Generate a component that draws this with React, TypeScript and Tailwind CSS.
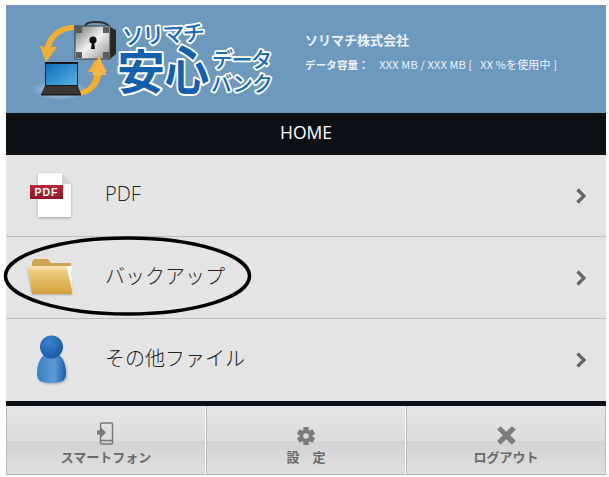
import React from "react";

const JP = "font-['Noto_Sans_CJK_JP','Noto_Sans',sans-serif]";
const LABEL = "font-['Open_Sans','Noto_Sans_CJK_JP',sans-serif]";

function Logo() {
  const ff = "'Noto Sans CJK JP', sans-serif";
  const t = {
    fontFamily: ff,
    fontWeight: 700,
    stroke: "#ffffff",
    paintOrder: "stroke",
    strokeLinejoin: "round" as const,
    fill: "#1560ae",
  };
  const s = { ...t, fontWeight: 500, fill: "#1c6cb8" };
  return (
    <svg width="294" height="108" viewBox="6 5 294 108" className="shrink-0">
      <defs>
        <linearGradient id="lid" x1="0" y1="0" x2="1" y2="1">
          <stop offset="0" stopColor="#6d6d6d" />
          <stop offset="0.5" stopColor="#f2f2f2" />
          <stop offset="1" stopColor="#8a8a8a" />
        </linearGradient>
        <linearGradient id="scr" x1="0" y1="0" x2="1" y2="1">
          <stop offset="0" stopColor="#0f6db8" />
          <stop offset="1" stopColor="#56b2e6" />
        </linearGradient>
        <radialGradient id="glow">
          <stop offset="0" stopColor="#dbe8f4" stopOpacity="0.85" />
          <stop offset="1" stopColor="#dbe8f4" stopOpacity="0" />
        </radialGradient>
      </defs>
      <ellipse cx="60" cy="90" rx="28" ry="10" fill="url(#glow)" />
      <path d="M74 30 C61 31 54 37 51 47 L57 47 L46 62 L40 46 L45 47 C48 35 58 25 74 25 Z" fill="#f4ae2e" />
      <path d="M79 91 C89 89 93 83 95 72 L88 72 L98 55 L107 72 L102 72 C100 86 92 94 79 96 Z" fill="#f4ae2e" />
      <path d="M85 27 C85 23 90 22 95 22 C103 22 108 23 109 27" fill="none" stroke="#2c2c2c" strokeWidth="2" />
      <path d="M110 27 L116 30 L116 54 L110 59 Z" fill="#2d2622" />
      <rect x="75" y="26" width="35" height="33" fill="url(#lid)" stroke="#3a3a3a" strokeWidth="1" />
      <rect x="76" y="27" width="6" height="6" fill="#5c5c5c" />
      <rect x="103" y="27" width="6" height="6" fill="#5c5c5c" />
      <rect x="76" y="52" width="6" height="6" fill="#5c5c5c" />
      <rect x="103" y="52" width="6" height="6" fill="#5c5c5c" />
      <circle cx="93" cy="40" r="3.6" fill="#111" />
      <path d="M92 41 L94 41 L95 49 L91 49 Z" fill="#111" />
      <path d="M92 75 L106 75 L99 55 Z" fill="#f6b64a" />
      <rect x="45" y="62" width="33" height="24" fill="#1a1a1a" />
      <rect x="46" y="64" width="31" height="21" fill="url(#scr)" />
      <path d="M45 86 L78 86 L81 94 L41 94 Z" fill="#3a3533" />
      <rect x="41" y="94" width="40" height="1.5" fill="#1a1a1a" />
      <g transform="rotate(-3 160 35)">
        <text x="122" y="43" fontSize="22" textLength="83" strokeWidth="3.5" style={s}>ソリマチ</text>
      </g>
      <text x="117" y="89" fontSize="47" textLength="48" lengthAdjust="spacingAndGlyphs" strokeWidth="4" style={t}>安</text>
      <text x="165" y="90" fontSize="52" textLength="44" lengthAdjust="spacingAndGlyphs" strokeWidth="4" style={t}>心</text>
      <text x="212" y="67" fontSize="21" textLength="60" strokeWidth="3.5" style={s}>データ</text>
      <text x="211" y="91" fontSize="21" textLength="62" strokeWidth="3.5" style={s}>バンク</text>
    </svg>
  );
}

function Chevron() {
  return (
    <svg width="11" height="16" viewBox="0 0 11 16" className="shrink-0">
      <path d="M1.5 1.5 L8 8 L1.5 14.5" fill="none" stroke="#666666" strokeWidth="3.2" />
    </svg>
  );
}

function PdfIcon() {
  return (
    <svg width="50" height="54" viewBox="0 0 50 54" className="translate-x-[2px] translate-y-[3px]">
      <defs>
        <filter id="s1" x="-30%" y="-30%" width="160%" height="160%">
          <feDropShadow dx="0" dy="1" stdDeviation="1.5" floodColor="#000" floodOpacity="0.3" />
        </filter>
        <linearGradient id="rb" x1="0" y1="0" x2="0" y2="1">
          <stop offset="0" stopColor="#c2263a" />
          <stop offset="1" stopColor="#8e1526" />
        </linearGradient>
      </defs>
      <path d="M9 1 L33 1 L42 12 L42 45 L9 45 Z" fill="#fdfdfd" filter="url(#s1)" />
      <path d="M33 1 L33 12 L42 12 Z" fill="#d2d2d2" />
      <rect x="1" y="13" width="33" height="14" fill="url(#rb)" />
      <text x="17.5" y="24" textAnchor="middle" fontSize="10.5" fontWeight="700" letterSpacing="1" fill="#fff" fontFamily="'Liberation Sans', sans-serif">PDF</text>
    </svg>
  );
}

function FolderIcon() {
  return (
    <svg width="50" height="40" viewBox="0 0 50 40" className="-translate-x-[2px]">
      <defs>
        <filter id="s2" x="-20%" y="-20%" width="140%" height="140%">
          <feDropShadow dx="0" dy="1" stdDeviation="1" floodColor="#000" floodOpacity="0.25" />
        </filter>
        <linearGradient id="fd" x1="0" y1="0" x2="0" y2="1">
          <stop offset="0" stopColor="#f8e6b4" />
          <stop offset="0.2" stopColor="#ecca7c" />
          <stop offset="1" stopColor="#d6a03a" />
        </linearGradient>
      </defs>
      <path d="M7 4 L9 1 L23 1 L26 5 L46 5 L46 10 L7 10 Z" fill="#cfa552" />
      <path d="M2 8 L44 8 L47 36 L7 36 Z" fill="url(#fd)" filter="url(#s2)" />
      <path d="M41 8 L46 8 L47 30 Z" fill="#ffffff" />
    </svg>
  );
}

function PersonIcon() {
  return (
    <svg width="44" height="52" viewBox="0 0 44 52">
      <defs>
        <radialGradient id="hd" cx="0.4" cy="0.3" r="0.8">
          <stop offset="0" stopColor="#3f82cc" />
          <stop offset="1" stopColor="#1255a5" />
        </radialGradient>
        <linearGradient id="bd" x1="0" y1="0" x2="1" y2="0">
          <stop offset="0" stopColor="#3a80c8" />
          <stop offset="0.6" stopColor="#5f98d4" />
          <stop offset="1" stopColor="#1a5fae" />
        </linearGradient>
        <filter id="s3" x="-20%" y="-20%" width="140%" height="140%">
          <feDropShadow dx="1" dy="1" stdDeviation="1" floodColor="#000" floodOpacity="0.25" />
        </filter>
      </defs>
      <path d="M14 21 C9 25 7 32 7 40 C7 47 11 49 21 49 C31 49 36 47 36 40 C36 32 34 25 29 21 Z" fill="url(#bd)" filter="url(#s3)" />
      <circle cx="21.5" cy="13" r="11.5" fill="url(#hd)" />
    </svg>
  );
}

function Row({ icon, label, border, latin }: { icon: React.ReactNode; label: string; border?: boolean; latin?: boolean }) {
  return (
    <div className={`flex h-[82px] items-center bg-[#e4e4e4] pr-[19px] ${border ? "border-b border-[#bdbdbd]" : ""}`}>
      <div className="flex w-[99px] shrink-0 justify-center pr-[7px]">{icon}</div>
      <div className={`flex-1 text-[20px] font-light leading-none text-[#222222] ${latin ? "-translate-y-[2px]" : "-translate-y-[1px]"} ${LABEL}`}>{label}</div>
      <Chevron />
    </div>
  );
}

function FootButton({ icon, label, last }: { icon: React.ReactNode; label: string; last?: boolean }) {
  return (
    <div className={`relative flex h-[69px] flex-1 flex-col items-center border-b border-[#b5b5b5] border-l border-l-[#b9b9b9] bg-[linear-gradient(to_bottom,#e6e6e6_0%,#dcdcdc_52%,#d2d2d2_52%,#dfdfdf_100%)] pt-[16px] ${last ? "border-r border-r-[#b9b9b9]" : "border-r border-r-white"}`}>
      <div className="flex h-[24px] items-end justify-center">{icon}</div>
      <div className={`mt-[1px] whitespace-pre text-[13px] font-bold leading-[20px] text-[#6a6a6a] ${JP}`}>{label}</div>
    </div>
  );
}

export default function App() {
  return (
    <div className="relative h-[477px] w-[609px] overflow-hidden bg-white pl-[6px] pr-[3px] pt-[5px]">
      <header className="flex h-[108px] bg-[#6e99bf]">
        <Logo />
        <div className={`pl-[5px] pt-[26px] text-[#edf2f7] ${JP}`}>
          <div className="text-[13px] font-bold leading-[18px]">ソリマチ株式会社</div>
          <div className="mt-[7px] whitespace-pre text-[11px] leading-[16px] tracking-[0.15px]">
            <span className="text-[10.5px] font-bold">データ容量：</span>
            {"    XXX MB / XXX MB [   XX %を使用中 ]"}
          </div>
        </div>
      </header>
      <div className="flex h-[42px] items-center justify-center bg-[#0d1116] pb-[3px] font-['Open_Sans',sans-serif] text-[17.5px] text-white">HOME</div>
      <Row icon={<PdfIcon />} label="PDF" border latin />
      <Row icon={<FolderIcon />} label="バックアップ" border />
      <Row icon={<PersonIcon />} label="その他ファイル" />
      <div className="h-[5px] bg-[#0d1116]" />
      <div className="flex">
        <FootButton
          label="スマートフォン"
          icon={
            <svg width="18" height="24" viewBox="0 0 18 24">
              <rect x="3.5" y="1" width="12" height="21" rx="1.5" fill="none" stroke="#7a7a7a" strokeWidth="1.5" />
              <path d="M3.5 18.5 L15.5 18.5" stroke="#7a7a7a" strokeWidth="1.5" />
              <path d="M0 8.5 L4 8.5 L4 5.5 L9 10.5 L4 15.5 L4 12.5 L0 12.5 Z" fill="#7a7a7a" />
            </svg>
          }
        />
        <FootButton
          label={"設　定"}
          icon={
            <svg width="20" height="20" viewBox="0 0 22 22">
              <g fill="#7c7c7c">
                <rect x="8" y="1" width="6" height="20" rx="1" />
                <rect x="8" y="1" width="6" height="20" rx="1" transform="rotate(60 11 11)" />
                <rect x="8" y="1" width="6" height="20" rx="1" transform="rotate(120 11 11)" />
              </g>
              <circle cx="11" cy="11" r="7" fill="#7c7c7c" />
              <circle cx="11" cy="11" r="3" fill="#dcdcdc" />
            </svg>
          }
        />
        <FootButton
          last
          label="ログアウト"
          icon={
            <svg width="21" height="21" viewBox="2 2 18.5 18.5">
              <path d="M3 6 L6 3 L11 8 L16 3 L19.5 6 L14.5 11 L19.5 16 L16 19.5 L11 14.5 L6 19.5 L3 16 L8 11 Z" fill="#7c7c7c" />
            </svg>
          }
        />
      </div>
      <svg width="609" height="477" className="pointer-events-none absolute left-0 top-0">
        <ellipse cx="127.5" cy="276" rx="122" ry="38" fill="none" stroke="#000" strokeWidth="3.5" />
      </svg>
    </div>
  );
}
